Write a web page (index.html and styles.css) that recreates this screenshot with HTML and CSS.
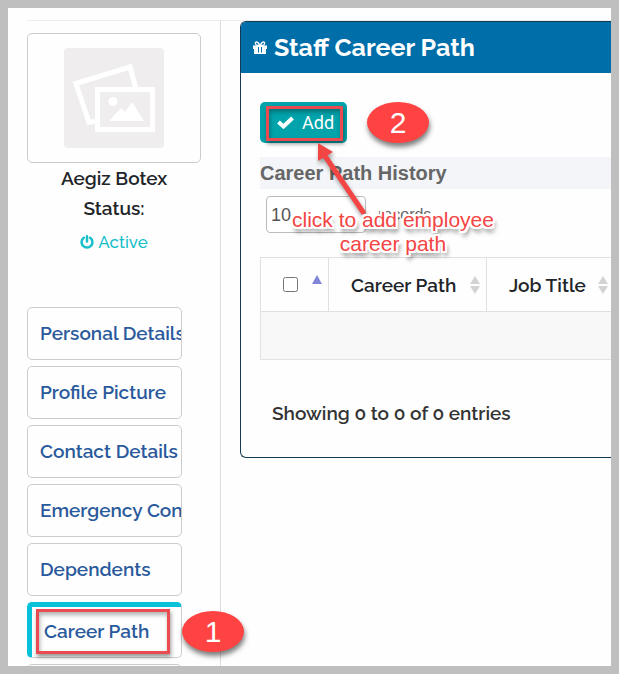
FILE: index.html
```html
<!DOCTYPE html>
<html lang="en">
<head>
  <meta charset="UTF-8">
  <meta name="viewport" content="width=device-width, initial-scale=1">
  <title>Staff Career Path</title>
  <link rel="stylesheet" href="styles.css">
</head>
<body>
  <div class="page">
    <aside class="sidebar">
      <div class="photo">
        <svg viewBox="0 0 100 100" width="100" height="100" role="img" aria-label="No photo">
          <rect width="100" height="100" rx="4" fill="#efedee"/>
          <path d="M31 73l-6 1.500L12 35.500 66 19l6 22" fill="none" stroke="#fff" stroke-width="5"/>
          <rect x="33.500" y="41.500" width="55" height="40" fill="#efedee" stroke="#fff" stroke-width="5"/>
          <circle cx="49" cy="53.500" r="4.500" fill="#fff"/>
          <path d="M45 73l12-13 4 4 7-10 12 19z" fill="#fff"/>
        </svg>
      </div>
      <div class="staff">
        <div>Aegiz Botex</div>
        <div>Status:</div>
        <div class="status">
          <svg viewBox="0 0 14 14" width="14" height="14" aria-hidden="true">
            <path d="M3.800 2.800a5.400 5.400 0 1 0 6.400 0M7 1.200v5.300" fill="none" stroke="currentColor" stroke-width="2.500" stroke-linecap="round"/>
          </svg>
          Active
        </div>
      </div>
      <nav class="menu">
        <a href="#">Personal Details</a>
        <a href="#">Profile Picture</a>
        <a href="#">Contact Details</a>
        <a href="#">Emergency Contacts</a>
        <a href="#">Dependents</a>
        <div class="step">
          <a href="#" class="active">Career Path</a>
          <span class="mark mark-menu"></span>
          <span class="badge badge-menu">1</span>
        </div>
        <a href="#" aria-label="More"></a>
      </nav>
    </aside>

    <main class="main">
      <section class="panel">
        <h1 class="panel-title">
          <svg viewBox="0 0 14 13" width="14" height="13" aria-hidden="true">
            <path d="M0 4.500h14V8h-1v5H1V8H0z" fill="#fff"/>
            <path d="M7 4.500C5.500 1.500 4.500 1 3.500 1 2 1 1.800 3.800 4 4.300zM7 4.500C8.500 1.500 9.500 1 10.500 1c1.500 0 1.700 2.800-.5 3.300z" fill="none" stroke="#fff" stroke-width="1.300"/>
            <path d="M5.500 6v5.500M8.500 6v5.500" stroke="#006ea9" stroke-width="1"/>
          </svg>
          Staff Career Path
        </h1>
        <div class="panel-body">
          <div class="step">
            <button type="button" class="add">
              <svg viewBox="0 0 17 13" width="17" height="13" aria-hidden="true">
                <path d="M1.500 6l5 4.500L15.500 2" fill="none" stroke="#fff" stroke-width="4"/>
              </svg>
              Add
            </button>
            <span class="mark mark-add"></span>
            <span class="badge badge-add">2</span>
            <svg class="arrow" viewBox="0 0 60 80" width="60" height="80" aria-hidden="true">
              <path d="M15 13l38 56" stroke="#f44545" stroke-width="5" stroke-linecap="round"/>
              <path d="M8 0v18l15-9z" fill="#f44545"/>
            </svg>
            <div class="note">click to add employee<br>career path</div>
          </div>

          <h2 class="section">Career Path History</h2>
          <label class="length">
            <select>
              <option>10</option>
              <option>25</option>
              <option>50</option>
            </select>
            records
          </label>

          <table class="history">
            <thead>
              <tr>
                <th class="col-check">
                  <div class="head">
                    <input type="checkbox" aria-label="Select all">
                    <svg viewBox="0 0 10 20" width="10" height="20" aria-hidden="true">
                      <path d="M0 9 5 0l5 9z" fill="#8085d6"/>
                    </svg>
                  </div>
                </th>
                <th class="col-path">
                  <div class="head">
                    Career Path
                    <svg viewBox="0 0 10 20" width="10" height="20" aria-hidden="true">
                      <path d="M0 9 5 1l5 8zM0 11l5 8 5-8z" fill="#d3d3d3"/>
                    </svg>
                  </div>
                </th>
                <th>
                  <div class="head">
                    Job Title
                    <svg viewBox="0 0 10 20" width="10" height="20" aria-hidden="true">
                      <path d="M0 9 5 1l5 8zM0 11l5 8 5-8z" fill="#d3d3d3"/>
                    </svg>
                  </div>
                </th>
              </tr>
            </thead>
            <tbody>
              <tr><td colspan="3"></td></tr>
            </tbody>
          </table>
          <p class="info">Showing 0 to 0 of 0 entries</p>
        </div>
      </section>
    </main>
  </div>
</body>
</html>
```
FILE: styles.css
```css
* {
  box-sizing: border-box;
}
body {
  margin: 0;
  height: 100vh;
  border: 8px solid #bfbfbf;
  padding: 12px 0 0 19px;
  overflow: hidden;
  background: #fefefe;
  color: #212529;
  font: 600 19px/30px Raleway, Inter, "Open Sans", sans-serif;
}
.page {
  display: flex;
  height: 100%;
  border-top: 1px solid #ececec;
  overflow: hidden;
}

/* Sidebar */
.sidebar {
  flex: 0 0 194px;
  padding: 12px 19px 0 0;
  border-right: 1px solid #ddd;
}
.photo {
  display: flex;
  justify-content: center;
  padding: 14px;
  border: 1px solid #ccc;
  border-radius: 5px;
}
.staff {
  text-align: center;
}
.status {
  display: flex;
  align-items: center;
  justify-content: center;
  gap: 4px;
  margin-top: 4px;
  color: #17bfcb;
  font-size: 17px;
  font-weight: 500;
}
.menu {
  display: flex;
  flex-direction: column;
  gap: 6px;
  width: 155px;
  margin-top: 50px;
}
.menu a {
  display: block;
  flex: none;
  height: 53px;
  padding: 10px 12px;
  border: 1px solid #ccc;
  border-radius: 5px;
  overflow: hidden;
  color: #2a5a9c;
  text-decoration: none;
  white-space: nowrap;
}
.menu .active {
  height: 56px;
  padding-top: 9px;
  border-top: 5px solid #06c1d8;
  border-left: 5px solid #06c1d8;
}
.step {
  position: relative;
}

/* Content */
.main {
  flex: 1;
  min-width: 0;
  padding-left: 19px;
}
.panel {
  border: 1px solid #143b54;
  border-right: 0;
  border-radius: 6px 0 0 6px;
}
.panel-title {
  display: flex;
  align-items: center;
  gap: 7px;
  margin: 0;
  padding: 0 12px 1px;
  border-radius: 5px 0 0 0;
  background: #006ea9;
  color: #fff;
  font-size: 25px;
  font-weight: 700;
  line-height: 50px;
}
.panel-body {
  padding: 29px 0 32px 19px;
}
.add {
  display: flex;
  align-items: center;
  gap: 8px;
  height: 41px;
  padding: 0 13px 0 17px;
  border: 0;
  border-radius: 5px;
  background: #02a3ab;
  color: #fff;
  font: 18px Roboto, sans-serif;
}
.section {
  margin: 14px 0 7px;
  background: #f4f5f8;
  color: #666;
  font: bold 20px/32px "Liberation Sans", Arial, sans-serif;
}
.length {
  display: flex;
  align-items: center;
  gap: 12px;
  margin-left: 6px;
  color: #666;
  font: 16px "Liberation Sans", Arial, sans-serif;
}
.length select {
  appearance: none;
  width: 100px;
  height: 37px;
  padding: 0 4px;
  border: 1px solid #bbb;
  border-radius: 4px;
  background: #fff;
  color: #555;
  font: 18px "Liberation Sans", Arial, sans-serif;
}
.history {
  width: 100%;
  margin-top: 24px;
  border-collapse: collapse;
  table-layout: fixed;
}
.history th {
  height: 54px;
  padding: 0;
  border: 1px solid #dde1e4;
  border-right: 0;
  font-weight: 600;
}
.history td {
  height: 48px;
  border: 1px solid #e0e4e6;
  border-right: 0;
  background: #f8f8f8;
}
.col-check {
  width: 68px;
}
.col-path {
  width: 158px;
}
.head {
  display: flex;
  align-items: center;
  justify-content: space-between;
  padding: 0 3px 0 22px;
  white-space: nowrap;
}
.col-path .head,
.col-check .head {
  padding-right: 6px;
}
.head input {
  width: 15px;
  height: 15px;
  margin: 0;
}
.info {
  margin: 41px 0 0 12px;
  color: #333;
  line-height: 24px;
}

/* Step marks */
.mark {
  position: absolute;
  border: 3px solid #e94b50;
  box-shadow: 1px 3px 4px rgba(0, 0, 0, 0.4), inset 1px 3px 4px rgba(0, 0, 0, 0.3);
  pointer-events: none;
}
.mark-menu {
  top: 7px;
  left: 9px;
  width: 134px;
  height: 45px;
}
.mark-add {
  top: 4px;
  left: 6px;
  width: 77px;
  height: 35px;
}
.badge {
  position: absolute;
  width: 62px;
  height: 41px;
  border-radius: 50%;
  background: #ff4343;
  box-shadow: 1px 4px 5px rgba(0, 0, 0, 0.5);
  color: #fff;
  font: 30px/41px "Liberation Sans", Arial, sans-serif;
  text-align: center;
}
.badge-menu {
  top: 9px;
  left: 155px;
}
.badge-add {
  top: 0;
  left: 107px;
}
.arrow {
  position: absolute;
  top: 41px;
  left: 50px;
  filter: drop-shadow(1px 3px 2px rgba(0, 0, 0, 0.4));
}
.note {
  position: absolute;
  top: 106px;
  left: 32px;
  color: #f44545;
  font: 21px/24px "Liberation Sans", Arial, sans-serif;
  text-align: center;
  text-shadow: 2px 0 #fff, -2px 0 #fff, 0 2px #fff, 0 -2px #fff,
    2px 2px #fff, -2px 2px #fff, 2px -2px #fff, -2px -2px #fff,
    2px 5px 4px rgba(0, 0, 0, 0.7);
  white-space: nowrap;
}
```
